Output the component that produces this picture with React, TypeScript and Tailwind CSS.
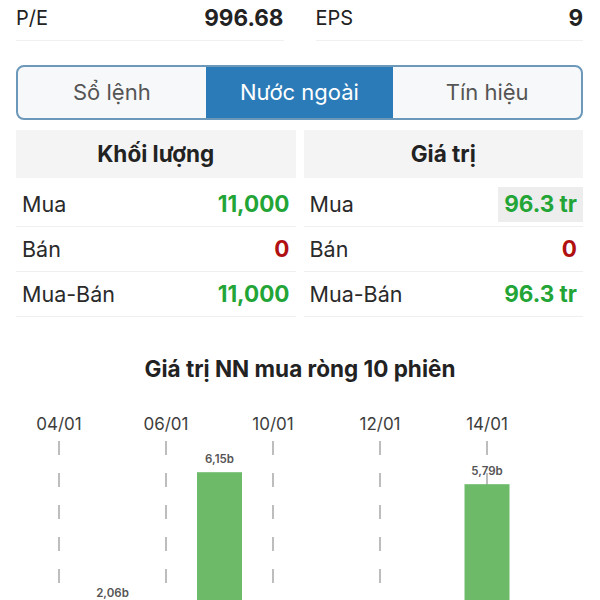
import React from 'react'

const font = { fontFamily: 'Inter, "Noto Sans", sans-serif' }

type Row = { label: string; value: string; tone: 'up' | 'down'; flash?: boolean }

const volumeRows: Row[] = [
  { label: 'Mua', value: '11,000', tone: 'up' },
  { label: 'Bán', value: '0', tone: 'down' },
  { label: 'Mua-Bán', value: '11,000', tone: 'up' },
]

const valueRows: Row[] = [
  { label: 'Mua', value: '96.3 tr', tone: 'up', flash: true },
  { label: 'Bán', value: '0', tone: 'down' },
  { label: 'Mua-Bán', value: '96.3 tr', tone: 'up' },
]

// net foreign buy per session (billions), index 0..9
const sessions = [
  { value: 0 },
  { value: 2.06 },
  { value: 0 },
  { value: 6.15 },
  { value: 0 },
  { value: 0 },
  { value: 0 },
  { value: 0 },
  { value: 5.79 },
  { value: 0 },
]

const dateLabels = ['04/01', '06/01', '10/01', '12/01', '14/01']

function StatTable({ title, rows }: { title: string; rows: Row[] }) {
  return (
    <div>
      <div className="h-[48px] mb-[4px] flex items-center justify-center bg-[#f4f4f4] text-[22.5px] font-bold text-[#222]">
        {title}
      </div>
      {rows.map((r) => (
        <div
          key={r.label}
          className="h-[45px] flex items-center justify-between pl-[6px] border-b border-[#efefef]"
        >
          <span className="text-[21.5px] text-[#2a2a2a]">{r.label}</span>
          <span
            className={`h-[35px] flex items-center px-[6px] text-[22.5px] font-bold ${
              r.flash ? 'bg-[#ededed]' : ''
            } ${r.tone === 'up' ? 'text-[#22a536]' : 'text-[#b01010]'}`}
          >
            {r.value}
          </span>
        </div>
      ))}
    </div>
  )
}

function NetChart() {
  const x0 = 59
  const step = 53.5
  const base = 296 // zero line sits below the visible area
  const k = 33.3

  return (
    <svg width="600" height="230" className="block" style={font}>
      {dateLabels.map((d, i) => (
        <text
          key={d}
          x={x0 + i * 2 * step}
          y={49}
          textAnchor="middle"
          fontSize="17"
          fill="#3d3d3d"
        >
          {d}
        </text>
      ))}
      {sessions.map((s, i) =>
        s.value > 0 ? (
          <text
            key={`l${i}`}
            x={x0 + i * step}
            y={Math.min(base - s.value * k - 9, 216)}
            textAnchor="middle"
            fontSize="11.5"
            fontWeight="600"
            fill="#555"
          >
            {s.value.toFixed(2).replace('.', ',')}b
          </text>
        ) : null
      )}
      {dateLabels.map((d, i) => (
        <line
          key={`g${d}`}
          x1={x0 + i * 2 * step}
          x2={x0 + i * 2 * step}
          y1={60}
          y2={230}
          stroke="#bdbdbd"
          strokeWidth="2"
          strokeDasharray="14 18"
        />
      ))}
      {sessions.map((s, i) =>
        s.value > 0 ? (
          <rect
            key={`b${i}`}
            x={x0 + i * step - 22.5}
            y={base - s.value * k}
            width="45"
            height={s.value * k}
            fill="#6dbb69"
          />
        ) : null
      )}
    </svg>
  )
}

export default function App() {
  const tabs = ['Sổ lệnh', 'Nước ngoài', 'Tín hiệu']
  const active = 1

  return (
    <div className="w-[600px] h-[600px] overflow-hidden bg-white" style={font}>
      <div className="pl-[16px] pr-[17px]">
        {/* P/E, EPS */}
        <div className="grid grid-cols-2 gap-8">
          <div className="h-[41px] pb-[5px] flex items-center justify-between border-b border-[#f0f0f0]">
            <span className="text-[20px] text-[#222]">P/E</span>
            <span className="text-[22.5px] font-bold text-[#222]">996.68</span>
          </div>
          <div className="h-[41px] pb-[5px] flex items-center justify-between border-b border-[#f0f0f0]">
            <span className="text-[20px] text-[#222]">EPS</span>
            <span className="text-[22.5px] font-bold text-[#222]">9</span>
          </div>
        </div>

        {/* Tabs */}
        <div className="mt-[24px] h-[55px] grid grid-cols-3 rounded-[8px] border-2 border-[#6c98ba] overflow-hidden bg-[#f7f8f9]">
          {tabs.map((t, i) => (
            <div
              key={t}
              className={`flex items-center justify-center text-[22px] ${
                i === active ? 'bg-[#2b7bb8] text-white' : 'text-[#555]'
              }`}
            >
              {t}
            </div>
          ))}
        </div>

        {/* Tables */}
        <div className="mt-[10px] grid grid-cols-2 gap-[8px]">
          <StatTable title="Khối lượng" rows={volumeRows} />
          <StatTable title="Giá trị" rows={valueRows} />
        </div>
      </div>

      {/* Chart */}
      <div className="mt-[40px] h-[24px] flex items-center justify-center text-[22.5px] font-bold text-[#222]">
        Giá trị NN mua ròng 10 phiên
      </div>
      <NetChart />
    </div>
  )
}
